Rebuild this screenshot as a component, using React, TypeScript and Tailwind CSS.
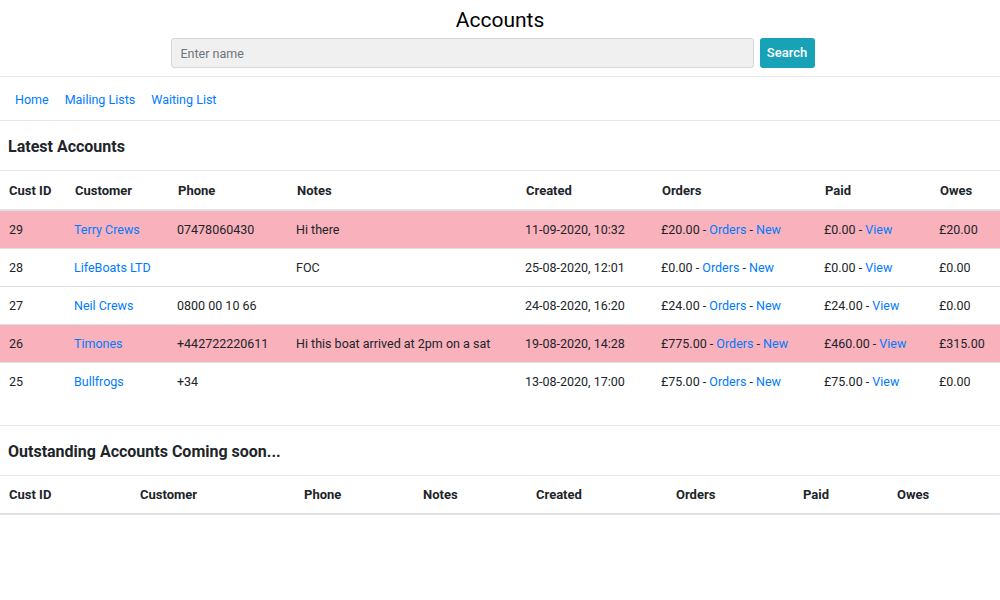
import React from "react";

type Row = {
  id: number;
  name: string;
  phone: string;
  notes: string;
  created: string;
  orders: string;
  paid: string;
  owes: string;
  danger?: boolean;
};

const rows: Row[] = [
  { id: 29, name: "Terry Crews", phone: "07478060430", notes: "Hi there", created: "11-09-2020, 10:32", orders: "£20.00", paid: "£0.00", owes: "£20.00", danger: true },
  { id: 28, name: "LifeBoats LTD", phone: "", notes: "FOC", created: "25-08-2020, 12:01", orders: "£0.00", paid: "£0.00", owes: "£0.00" },
  { id: 27, name: "Neil Crews", phone: "0800 00 10 66", notes: "", created: "24-08-2020, 16:20", orders: "£24.00", paid: "£24.00", owes: "£0.00" },
  { id: 26, name: "Timones", phone: "+442722220611", notes: "Hi this boat arrived at 2pm on a sat", created: "19-08-2020, 14:28", orders: "£775.00", paid: "£460.00", owes: "£315.00", danger: true },
  { id: 25, name: "Bullfrogs", phone: "+34", notes: "", created: "13-08-2020, 17:00", orders: "£75.00", paid: "£75.00", owes: "£0.00" },
];

const headers = ["Cust ID", "Customer", "Phone", "Notes", "Created", "Orders", "Paid", "Owes"];
const latestCols = "grid-cols-[66px_103px_119px_229px_136px_163px_115px_1fr]";
const outstandingCols = "grid-cols-[131px_164px_119px_113px_140px_127px_94px_1fr]";

function Link({ children }: { children: React.ReactNode }) {
  return <a className="text-[#007bff] cursor-pointer">{children}</a>;
}

export default function App() {
  return (
    <div className="w-[1000px] min-h-[600px] bg-white text-[#212529] text-[12.5px] font-['Roboto',sans-serif]">
      <header className="flex flex-col items-center pt-[7px] pb-[8px] border-b border-[#e5e7eb]">
        <h1 className="text-[21px] leading-[26px] text-black">Accounts</h1>
        <div className="flex gap-[6px] mt-[5px] mr-[15px]">
          <input
            placeholder="Enter name"
            className="w-[583px] h-[30px] px-[9px] bg-[#f0f0f0] border border-[#d4d7da] rounded-[3px] text-[12.5px] placeholder:text-[#6c757d] outline-none"
          />
          <button className="w-[55px] h-[30px] bg-[#17a2b8] text-white text-[13px] font-medium rounded-[3px]">Search</button>
        </div>
      </header>

      <nav className="flex gap-[16px] px-[15px] pt-[3px] h-[44px] items-center border-b border-[#e5e7eb]">
        <Link>Home</Link>
        <Link>Mailing Lists</Link>
        <Link>Waiting List</Link>
      </nav>

      <h2 className="h-[50px] flex items-center pt-[2px] px-[8px] text-[16px] font-bold border-b border-[#e5e7eb]">Latest Accounts</h2>

      <div className={`grid ${latestCols} h-[40px] items-center pt-[1px] border-b-2 border-[#dee2e6] font-bold text-[13px]`}>
        {headers.map((h) => (
          <div key={h} className="px-[9px]">{h}</div>
        ))}
      </div>
      {rows.map((r, i) => (
        <div
          key={r.id}
          className={`grid ${latestCols} h-[38px] items-center pt-[1px] ${i < rows.length - 1 ? "border-b border-[#dee2e6]" : ""} ${r.danger ? "bg-[#f9b1bc]" : ""}`}
        >
          <div className="px-[9px]">{r.id}</div>
          <div className="px-[8px]"><Link>{r.name}</Link></div>
          <div className="px-[8px]">{r.phone}</div>
          <div className="px-[8px]">{r.notes}</div>
          <div className="px-[8px]">{r.created}</div>
          <div className="px-[8px]">
            {r.orders} - <Link>Orders</Link> - <Link>New</Link>
          </div>
          <div className="px-[8px]">
            {r.paid} - <Link>View</Link>
          </div>
          <div className="px-[8px]">{r.owes}</div>
        </div>
      ))}

      <div className="h-[25px] border-b border-[#e5e7eb]" />
      <h2 className="h-[50px] flex items-center pt-[2px] px-[8px] text-[16px] font-bold border-b border-[#e5e7eb]">
        Outstanding Accounts Coming soon...
      </h2>
      <div className={`grid ${outstandingCols} h-[39px] items-center pt-[1px] border-b-2 border-[#dee2e6] font-bold text-[13px]`}>
        {headers.map((h) => (
          <div key={h} className="px-[9px]">{h}</div>
        ))}
      </div>
    </div>
  );
}
